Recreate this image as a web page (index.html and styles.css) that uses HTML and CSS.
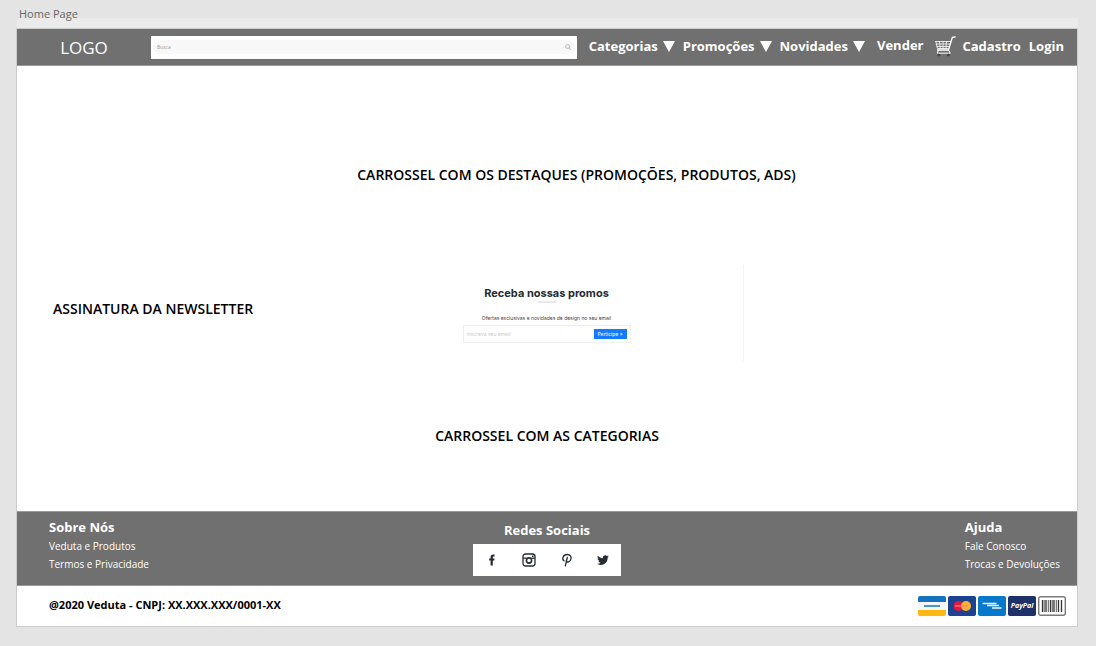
FILE: index.html
```html
<!DOCTYPE html>
<html lang="pt-BR">
<head>
<meta charset="utf-8">
<title>Home Page</title>
<link rel="stylesheet" href="styles.css">
</head>
<body>
<p class="frame-name">Home Page</p>
<div class="strip"></div>
<div class="page">
  <header class="header">
    <a class="logo" href="#">LOGO</a>
    <form class="search">
      <input class="search-input" type="search" placeholder="Busca" aria-label="Busca">
      <button class="search-button" type="button" aria-label="Buscar">
        <svg width="6" height="6" viewBox="0 0 12 12" fill="none" stroke="#aaa" stroke-width="1.6"><circle cx="5" cy="5" r="4"/><path d="M8 8l4 3.500"/></svg>
      </button>
    </form>
    <nav class="nav">
      <button class="menu" type="button">Categorias <svg width="12" height="11" viewBox="0 0 12 11"><path d="M0 0h12L6 11z" fill="#fff"/></svg></button>
      <button class="menu" type="button">Promoções <svg width="12" height="11" viewBox="0 0 12 11"><path d="M0 0h12L6 11z" fill="#fff"/></svg></button>
      <button class="menu" type="button">Novidades <svg width="12" height="11" viewBox="0 0 12 11"><path d="M0 0h12L6 11z" fill="#fff"/></svg></button>
      <a class="sell" href="#">Vender</a>
      <a class="cart" href="#" aria-label="Carrinho">
        <svg width="21" height="21" viewBox="0 0 21 21" fill="none" stroke="#fff" stroke-linecap="round" stroke-linejoin="round">
          <path d="M20.300 .8l-3 .7-3.800 12.500H2.500" stroke-width="1.300"/>
          <path d="M.8 5.500h14.800M1.200 8h13.600M1.800 10.500h12.400M.8 5.500L2.500 12.500h11M4.500 5.500l.8 7M8 5.500v7M11.500 5.500l-.6 7" stroke-width=".8"/>
          <path d="M13.500 14l1.800 3.200H2.300L3.500 14" stroke-width="1"/>
          <circle cx="3.800" cy="19" r="1" fill="#333" stroke="#444" stroke-width=".8"/>
          <circle cx="13.300" cy="19" r="1" fill="#333" stroke="#444" stroke-width=".8"/>
        </svg>
      </a>
      <a class="account" href="#">Cadastro</a>
      <a class="account" href="#">Login</a>
    </nav>
  </header>

  <main class="main">
    <section class="highlights"><h2 class="title">CARROSSEL COM OS DESTAQUES (PROMOÇÕES, PRODUTOS, ADS)</h2></section>
    <section class="newsletter">
      <h2 class="title">ASSINATURA DA NEWSLETTER</h2>
      <form class="signup">
        <h3 class="signup-title">Receba nossas promos</h3>
        <span class="signup-rule"></span>
        <label class="signup-text" for="email">Ofertas exclusivas e novidades de design no seu email</label>
        <div class="signup-box">
          <input class="signup-input" id="email" type="email" placeholder="Inscreva seu email">
          <button class="signup-button" type="button">Participe »</button>
        </div>
      </form>
    </section>
    <section class="categories"><h2 class="title">CARROSSEL COM AS CATEGORIAS</h2></section>
  </main>

  <footer>
    <div class="links">
      <div class="column about">
        <h3 class="heading">Sobre Nós</h3>
        <a class="link" href="#">Veduta e Produtos</a>
        <a class="link" href="#">Termos e Privacidade</a>
      </div>
      <div class="networks">
        <h3 class="heading">Redes Sociais</h3>
        <div class="social">
          <a class="social-link" href="#" aria-label="Facebook"><svg width="14" height="14" viewBox="0 0 14 14"><path d="M5.600 12.500V7.600H4.200V5.500h1.400V4.200c0-1.700.9-2.600 2.500-2.600h1.400v2H8.600c-.6 0-.8.3-.8.9v1h1.700l-.2 2.100H7.800v4.900z" fill="#262c33"/></svg></a>
          <a class="social-link" href="#" aria-label="Instagram"><svg width="14" height="14" viewBox="0 0 14 14" fill="none" stroke="#262c33" stroke-width="1.300"><rect x="1" y="1" width="12" height="12" rx="2.500"/><circle cx="7" cy="7.500" r="2.600" stroke-width="1.600"/><path d="M1 5.200h3.500M9.500 5.200H13"/><path d="M10 3.200h1.500" stroke-width="1.600"/></svg></a>
          <a class="social-link" href="#" aria-label="Pinterest"><svg width="14" height="14" viewBox="0 0 14 14" fill="none" stroke="#262c33" stroke-width="1.300" stroke-linecap="round"><path d="M4 7.800C1.500 5.800 3.200 1.500 7.200 1.500c3 0 4.400 2.200 3.700 4.600-.8 3-3.800 3.800-4.700 1.800M7.300 4.500L5.300 12.800"/></svg></a>
          <a class="social-link" href="#" aria-label="Twitter"><svg width="12" height="12" viewBox="0 0 24 24"><path d="M23.600 4.900c-.8.400-1.700.6-2.700.8 1-.6 1.700-1.500 2.100-2.600-.9.500-1.900.9-3 1.100a4.800 4.800 0 0 0-8.200 4.300C7.800 8.300 4.200 6.400 1.900 3.400a4.800 4.800 0 0 0 1.500 6.400c-.8 0-1.500-.2-2.200-.6 0 2.300 1.600 4.300 3.800 4.800-.7.200-1.400.2-2.100.1.600 1.900 2.400 3.300 4.500 3.300A9.500 9.500 0 0 1 .3 19.400a13.500 13.500 0 0 0 20.900-12c.9-.7 1.700-1.500 2.400-2.500z" fill="#262c33"/></svg></a>
        </div>
      </div>
      <div class="column help">
        <h3 class="heading">Ajuda</h3>
        <a class="link" href="#">Fale Conosco</a>
        <a class="link" href="#">Trocas e Devoluções</a>
      </div>
    </div>
    <div class="legal">
      <p class="copyright">@2020 Veduta - CNPJ: XX.XXX.XXX/0001-XX</p>
      <div class="cards">
        <svg width="28" height="20" viewBox="0 0 28 20"><rect width="28" height="20" rx="2" fill="#f4f7f9"/><path d="M0 6V2q0-2 2-2h24q2 0 2 2v4z" fill="#1673bb"/><path d="M0 14v4q0 2 2 2h24q2 0 2-2v-4z" fill="#fdb813"/><path d="M6 10h16" stroke="#4c96cd" stroke-width="2"/></svg>
        <svg width="28" height="20" viewBox="0 0 28 20"><rect width="28" height="20" rx="2" fill="#1c4290"/><circle cx="10.500" cy="10" r="5" fill="#e5173f"/><circle cx="18" cy="10" r="5" fill="#fbb231"/><path d="M7 10h13" stroke="#f0817a" stroke-width="1.200"/></svg>
        <svg width="28" height="20" viewBox="0 0 28 20"><rect width="28" height="20" rx="2" fill="#0879ca"/><path d="M4.500 7.500h14M9 9.500h12M14 12h9.500" fill="none" stroke="#e8f5fd" stroke-width="1.600"/></svg>
        <svg width="28" height="20" viewBox="0 0 28 20"><rect width="28" height="20" rx="2" fill="#1e3269"/><text class="paypal" x="14" y="12" text-anchor="middle">PayPal</text></svg>
        <svg width="28" height="20" viewBox="0 0 28 20"><rect x=".7" y=".7" width="26.600" height="18.600" rx="2" fill="#fff" stroke="#77797b" stroke-width="1.400"/><path d="M4.500 4v12M8 4v12M12.500 4v12M16 4v12M20.500 4v12M23.500 4v12" stroke="#333" stroke-width="1.300"/><path d="M6.200 4v12M10.300 4v12M14.300 4v12M18.300 4v12" stroke="#444" stroke-width=".9"/></svg>
      </div>
    </div>
  </footer>
</div>
</body>
</html>
```
FILE: styles.css
```css
* { box-sizing: border-box; }
body {
  margin: 0;
  padding: 6px 18px 19px 16px;
  min-height: 100vh;
  display: flex;
  flex-direction: column;
  background: #e4e4e4;
  color: #000;
  font-family: "Open Sans", "Noto Sans", sans-serif;
  font-size: 13px;
}
h2, h3, p { margin: 0; }
a { color: inherit; text-decoration: none; }
button, input { font: inherit; border: 0; padding: 0; background: none; }
svg { display: block; flex: none; }

.frame-name {
  position: relative;
  z-index: 1;
  height: 12px;
  padding-left: 3px;
  font-size: 11px;
  line-height: 16px;
  color: #666;
}
.strip { height: 10px; margin-left: 1px; background: #ebebeb; }
.page {
  flex: 1;
  display: flex;
  flex-direction: column;
  background: #fff;
  border: 1px solid #ccc;
}

.header {
  display: flex;
  align-items: center;
  height: 37px;
  padding-right: 13px;
  background: #707070;
  border-bottom: 1px solid #999;
  color: #fff;
}
.logo { width: 134px; text-align: center; font-size: 17px; }
.search {
  flex: 1;
  min-width: 80px;
  display: flex;
  align-items: center;
  height: 23px;
  padding: 4px 2px;
  background: #fff;
}
.search-input {
  flex: 1;
  min-width: 0;
  height: 14px;
  padding-left: 4px;
  border-radius: 7px 0 0 7px;
  background: #f8f8f8;
  font-size: 5px;
}
.search-input::placeholder { color: #999; }
.search-button {
  display: flex;
  align-items: center;
  height: 14px;
  padding-right: 4px;
  border-radius: 0 7px 7px 0;
  background: #f8f8f8;
}
.nav { display: flex; align-items: center; gap: 8px; margin-left: 12px; padding-bottom: 2px; font-weight: 700; }
.menu { display: flex; align-items: center; gap: 5px; color: #fff; }
.sell { margin-left: 4px; padding-bottom: 2px; }
.cart { margin: 0 -2px 0 4px; }

.main { flex: 1; display: grid; grid-template-rows: 199px 96px 1fr; }
.title { font-size: 14px; font-weight: 600; line-height: 18px; }
.highlights { display: grid; place-items: center; padding: 18px 0 0 59px; }
.newsletter { display: grid; grid-template-columns: 333px 394px; }
.newsletter .title { align-self: center; padding: 0 0 8px 36px; }
.signup {
  display: flex;
  flex-direction: column;
  align-items: center;
  padding-top: 20px;
  border-right: 1px solid #f3f3f3;
  font-family: Inter, sans-serif;
}
.signup-title { font-size: 11px; line-height: 16px; color: #222b33; }
.signup-rule { width: 18px; height: 2px; background: #e8e8e8; }
.signup-text { margin-top: 10px; font-size: 5px; line-height: 10px; color: #444; }
.signup-box {
  display: flex;
  align-items: center;
  width: 168px;
  height: 18px;
  margin-top: 2px;
  padding: 0 3px;
  border: 1px solid #eee;
}
.signup-input { flex: 1; min-width: 0; font-size: 5px; }
.signup-input::placeholder { color: #ccc; }
.signup-button { width: 33px; height: 10px; background: #147aff; color: #fff; font-size: 5px; line-height: 10px; }
.categories { display: grid; justify-items: center; align-content: center; }

.links {
  display: grid;
  grid-template-columns: 1fr auto 1fr;
  min-height: 75px;
  padding: 6px 17px 9px;
  background: #707070;
  border-top: 1px solid #999;
  border-bottom: 1px solid #999;
  color: #fff;
}
.column { display: flex; flex-direction: column; }
.about { padding-left: 15px; }
.help { justify-self: end; }
.heading { font-size: 13px; line-height: 18px; font-weight: 700; }
.link { font-size: 10px; line-height: 18px; }
.heading + .link { padding-top: 1px; }
.networks { padding-top: 3px; text-align: center; }
.social {
  display: flex;
  justify-content: space-around;
  align-items: center;
  width: 148px;
  height: 32px;
  margin-top: 5px;
  background: #fff;
}
.legal { display: flex; align-items: center; justify-content: space-between; height: 40px; padding: 0 11px 0 32px; }
.copyright { padding-bottom: 3px; font-size: 11px; font-weight: 700; }
.cards { display: flex; gap: 2px; }
.paypal { fill: #fff; font: italic 700 7px "Open Sans", sans-serif; }
```
